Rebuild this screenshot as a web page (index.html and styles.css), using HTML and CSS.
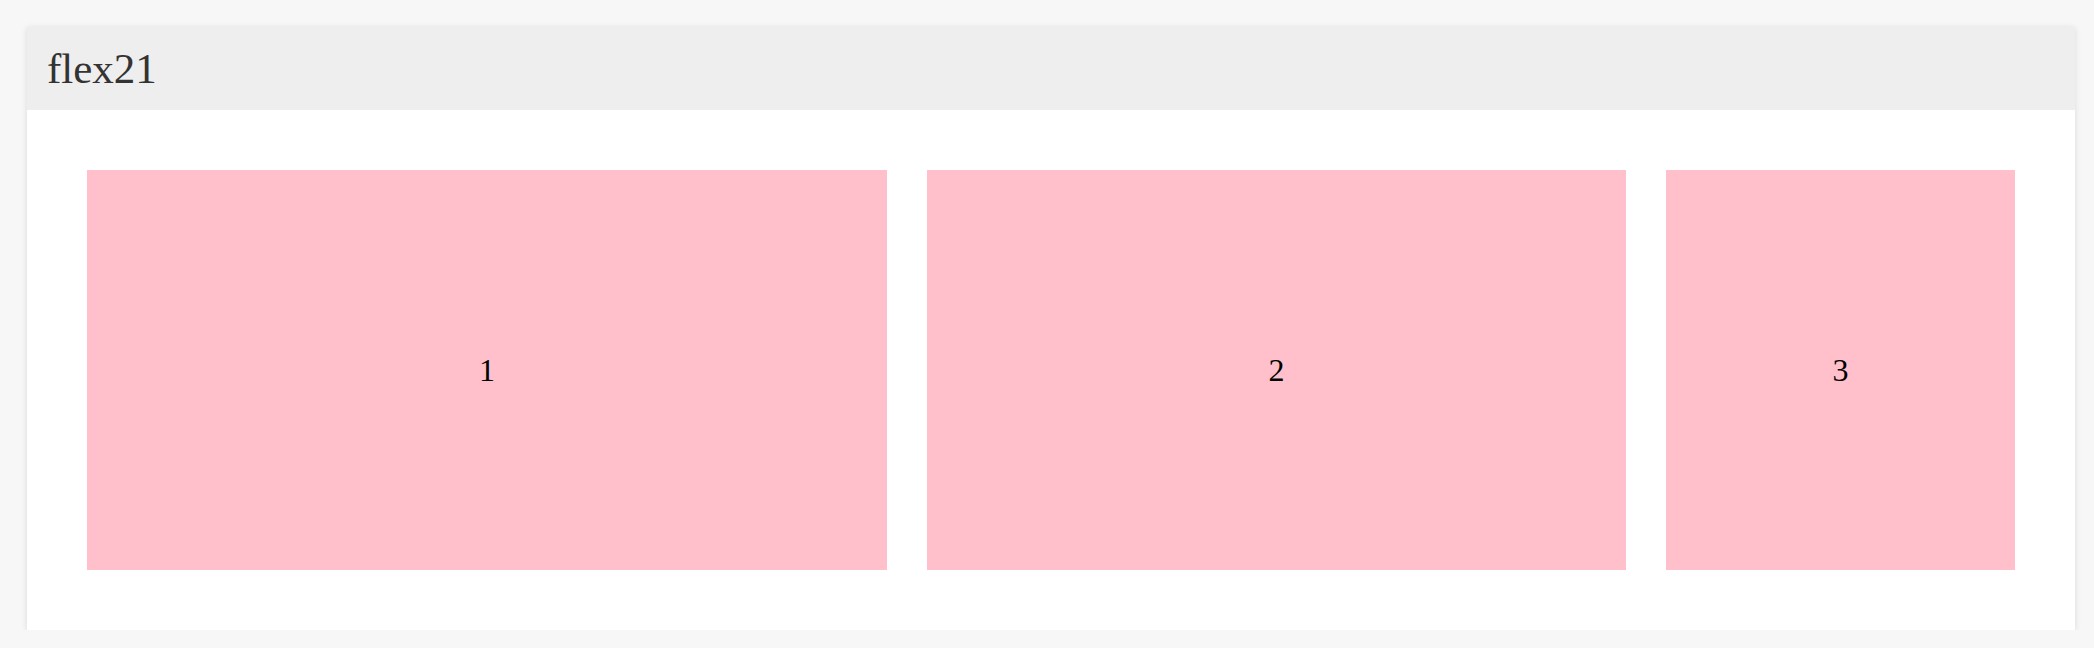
FILE: index.html
```html
<!DOCTYPE html>
<html>
<head>
<meta charset="utf-8">
<link rel="stylesheet" href="styles.css">
</head>
<body>
<div class="card">
  <div class="card-header">flex21</div>
  <div class="card-body">
    <div class="row">
      <div class="item item-1">1</div>
      <div class="item item-2">2</div>
      <div class="item item-3">3</div>
    </div>
  </div>
</div>
</body>
</html>
```
FILE: styles.css
```css
html, body {
  margin: 0;
  background: #f7f7f7;
}
body {
  padding: 27px 19px 0 27px;
  font-family: "Liberation Serif", "Times New Roman", serif;
}
.card {
  background: #ffffff;
  box-shadow: 0 1px 6px rgba(0, 0, 0, 0.12);
}
.card-header {
  height: 83px;
  box-sizing: border-box;
  background: #eeeeee;
  color: #333333;
  font-size: 43px;
  line-height: 83px;
  padding-left: 20px;
}
.card-body {
  padding: 60px;
}
.row {
  display: flex;
  gap: 40px;
  height: 400px;
}
.item {
  background: #ffc0cb;
  display: flex;
  align-items: center;
  justify-content: center;
  font-size: 32px;
  color: #000;
}
.item-1 { width: 800px; }
.item-2 { width: 699px; }
.item-3 { width: 349px; }
```
